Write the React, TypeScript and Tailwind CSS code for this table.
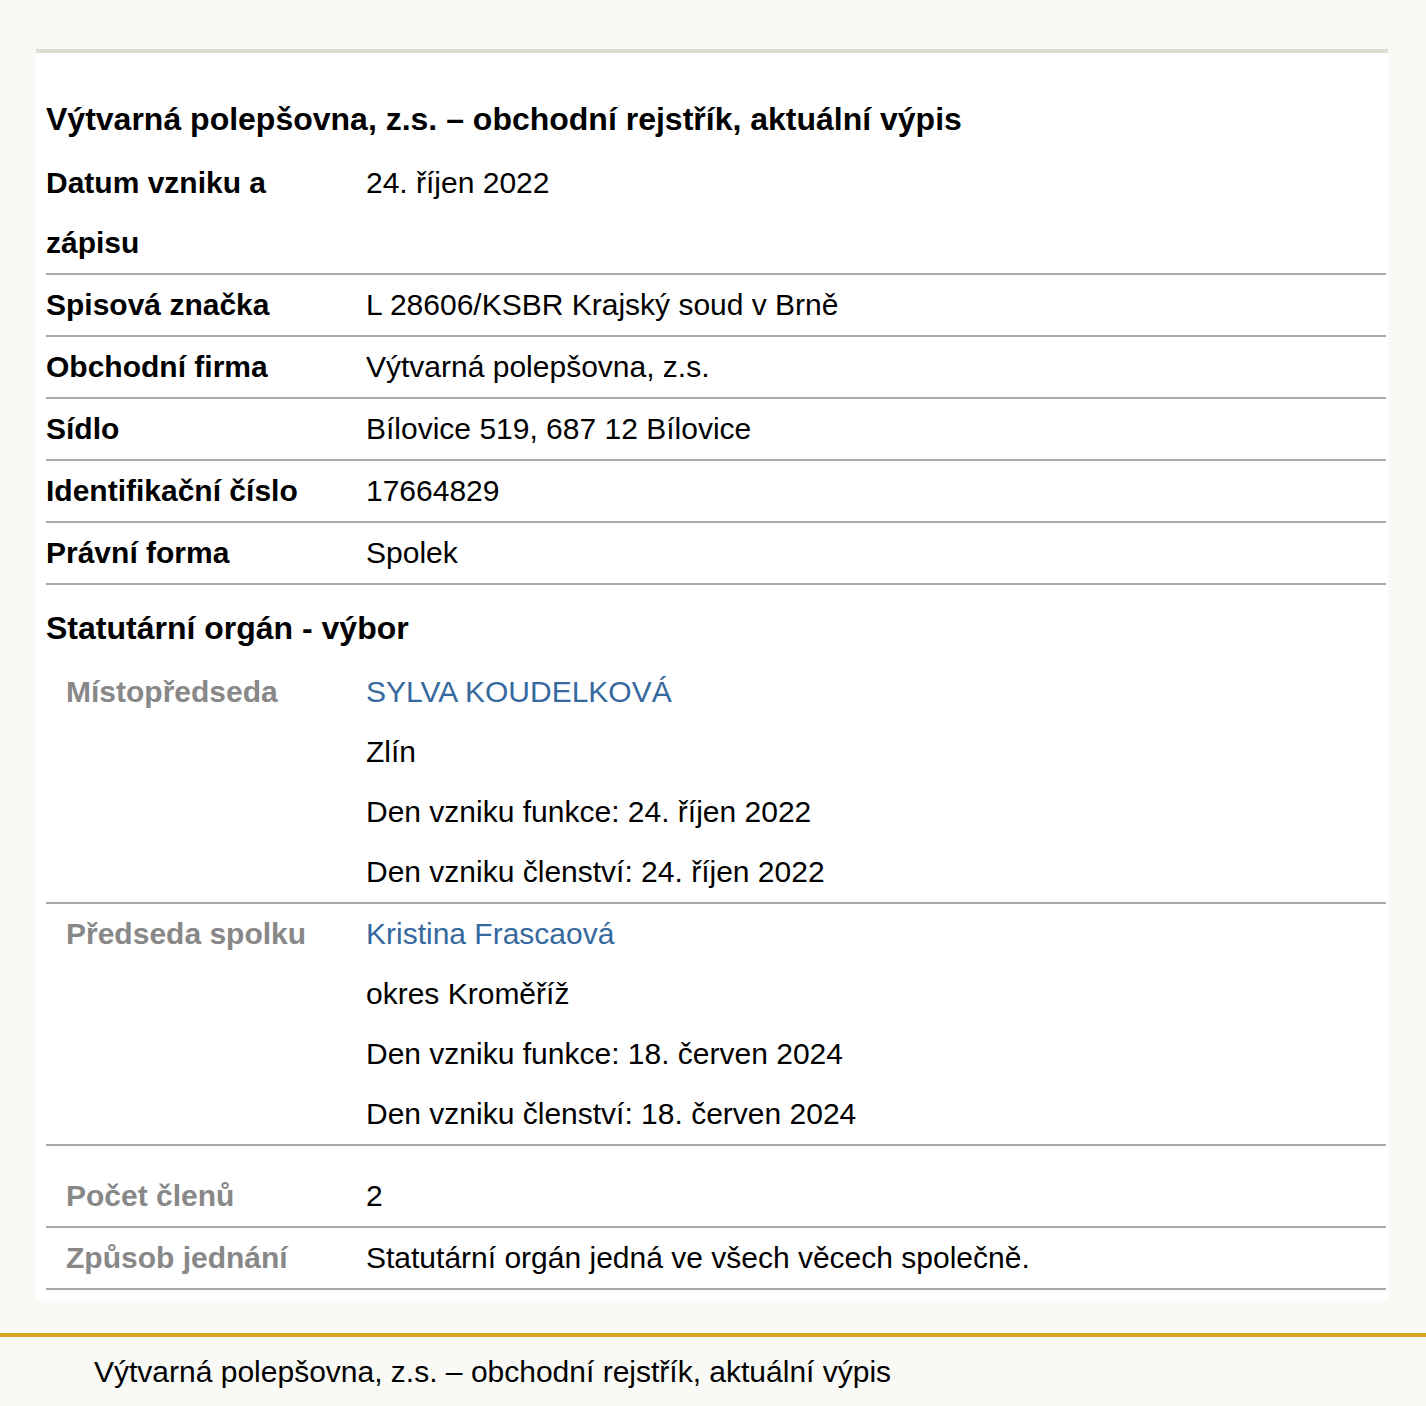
const font = "font-['Liberation_Sans',Arial,sans-serif]";

type Row = { label: string; lines: { text: string; link?: boolean }[] };

const basic: Row[] = [
  { label: 'Datum vzniku a zápisu', lines: [{ text: '24. říjen 2022' }] },
  { label: 'Spisová značka', lines: [{ text: 'L 28606/KSBR Krajský soud v Brně' }] },
  { label: 'Obchodní firma', lines: [{ text: 'Výtvarná polepšovna, z.s.' }] },
  { label: 'Sídlo', lines: [{ text: 'Bílovice 519, 687 12 Bílovice' }] },
  { label: 'Identifikační číslo', lines: [{ text: '17664829' }] },
  { label: 'Právní forma', lines: [{ text: 'Spolek' }] },
];

const members: Row[] = [
  {
    label: 'Místopředseda',
    lines: [
      { text: 'SYLVA KOUDELKOVÁ', link: true },
      { text: 'Zlín' },
      { text: 'Den vzniku funkce: 24. říjen 2022' },
      { text: 'Den vzniku členství: 24. říjen 2022' },
    ],
  },
  {
    label: 'Předseda spolku',
    lines: [
      { text: 'Kristina Frascaová', link: true },
      { text: 'okres Kroměříž' },
      { text: 'Den vzniku funkce: 18. červen 2024' },
      { text: 'Den vzniku členství: 18. červen 2024' },
    ],
  },
];

const extra: Row[] = [
  { label: 'Počet členů', lines: [{ text: '2' }] },
  { label: 'Způsob jednání', lines: [{ text: 'Statutární orgán jedná ve všech věcech společně.' }] },
];

function DataRow({ row, nested }: { row: Row; nested?: boolean }) {
  return (
    <div className="flex border-b-2 border-[#aaaaaa] text-[30px] leading-[60px]">
      <div
        className={
          nested
            ? 'w-[320px] shrink-0 pl-[20px] pr-[20px] font-bold text-[#888888]'
            : 'w-[320px] shrink-0 pr-[20px] font-bold text-black'
        }
      >
        {row.label}
      </div>
      <div className="flex flex-col">
        {row.lines.map((l) => (
          <div key={l.text} className={l.link ? 'text-[#36699e]' : 'text-black'}>
            {l.text}
          </div>
        ))}
      </div>
    </div>
  );
}

export default function App() {
  return (
    <div className={`${font} min-h-[1406px] bg-[#f9f9f5] pt-[49px]`}>
      <div className="ml-[36px] mr-[38px] border-t-4 border-[#dcdccf] bg-white pb-[10px] pl-[10px] pr-[2px]">
        <h1 className="mb-[4px] pt-[36px] text-[32px] font-bold leading-[60px] text-black">
          Výtvarná polepšovna, z.s. – obchodní rejstřík, aktuální výpis
        </h1>
        <div>
          {basic.map((r) => (
            <DataRow key={r.label} row={r} />
          ))}
        </div>
        <h2 className="mb-[11px] pt-[20px] text-[32px] font-bold leading-[46px] text-black">
          Statutární orgán - výbor
        </h2>
        <div>
          {members.map((r) => (
            <DataRow key={r.label} row={r} nested />
          ))}
        </div>
        <div className="mt-[20px]">
          {extra.map((r) => (
            <DataRow key={r.label} row={r} nested />
          ))}
        </div>
      </div>
      <footer className="mt-[33px] border-t-4 border-[#daa520] pl-[94px] pt-[15px] text-[30px] leading-[40px] text-black">
        Výtvarná polepšovna, z.s. – obchodní rejstřík, aktuální výpis
      </footer>
    </div>
  );
}
